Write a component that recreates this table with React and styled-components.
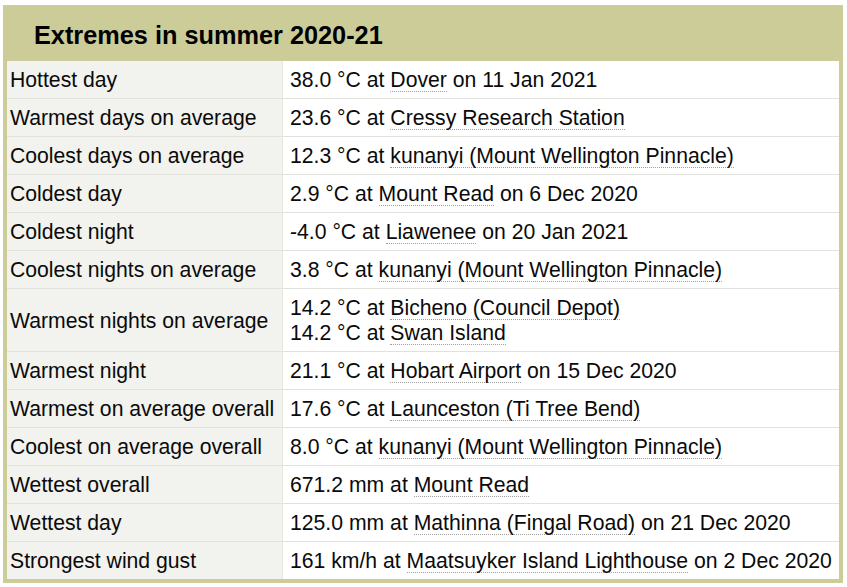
import React from "react";
import styled, { createGlobalStyle } from "styled-components";

const GlobalStyle = createGlobalStyle`
  body {
    margin: 0;
    background: #ffffff;
    font-family: "Liberation Sans", Arial, sans-serif;
  }
`;

const Page = styled.div`
  padding: 5px 0 0 3px;
`;

const Box = styled.div`
  width: 832px;
  border: 4px solid #cccc99;
  background: #cccc99;
`;

const Heading = styled.h2`
  margin: 0;
  height: 52px;
  padding-left: 27px;
  display: flex;
  align-items: center;
  font-size: 25.3px;
  font-weight: bold;
  color: #000;
`;

const Table = styled.table`
  width: 100%;
  border-collapse: collapse;
  font-size: 21.2px;
  line-height: 25px;
  color: #0a0a0a;
`;

const Row = styled.tr`
  border-top: 1px solid #e2e2dc;
  &:first-child {
    border-top: none;
  }
`;

const Label = styled.td`
  width: 272px;
  padding: 6px 0 6px 3px;
  background: #f2f2ee;
  border-right: 1px solid #e6e6e0;
  white-space: nowrap;
  vertical-align: middle;
`;

const Value = styled.td`
  padding: 6px 0 6px 7px;
  background: #ffffff;
  white-space: nowrap;
`;

const Place = styled.span`
  border-bottom: 1px dotted #a0a0a0;
`;

const rows = [
  ["Hottest day", [["38.0 °C at ", "Dover", " on 11 Jan 2021"]]],
  ["Warmest days on average", [["23.6 °C at ", "Cressy Research Station", ""]]],
  ["Coolest days on average", [["12.3 °C at ", "kunanyi (Mount Wellington Pinnacle)", ""]]],
  ["Coldest day", [["2.9 °C at ", "Mount Read", " on 6 Dec 2020"]]],
  ["Coldest night", [["-4.0 °C at ", "Liawenee", " on 20 Jan 2021"]]],
  ["Coolest nights on average", [["3.8 °C at ", "kunanyi (Mount Wellington Pinnacle)", ""]]],
  [
    "Warmest nights on average",
    [
      ["14.2 °C at ", "Bicheno (Council Depot)", ""],
      ["14.2 °C at ", "Swan Island", ""],
    ],
  ],
  ["Warmest night", [["21.1 °C at ", "Hobart Airport", " on 15 Dec 2020"]]],
  ["Warmest on average overall", [["17.6 °C at ", "Launceston (Ti Tree Bend)", ""]]],
  ["Coolest on average overall", [["8.0 °C at ", "kunanyi (Mount Wellington Pinnacle)", ""]]],
  ["Wettest overall", [["671.2 mm at ", "Mount Read", ""]]],
  ["Wettest day", [["125.0 mm at ", "Mathinna (Fingal Road)", " on 21 Dec 2020"]]],
  ["Strongest wind gust", [["161 km/h at ", "Maatsuyker Island Lighthouse", " on 2 Dec 2020"]]],
];

export default function App() {
  return (
    <>
      <GlobalStyle />
      <Page>
        <Box>
          <Heading>Extremes in summer 2020-21</Heading>
          <Table>
            <tbody>
              {rows.map(([label, lines]) => (
                <Row key={label}>
                  <Label>{label}</Label>
                  <Value>
                    {lines.map(([pre, place, post], i) => (
                      <React.Fragment key={i}>
                        {i > 0 && <br />}
                        {pre}
                        <Place>{place}</Place>
                        {post}
                      </React.Fragment>
                    ))}
                  </Value>
                </Row>
              ))}
            </tbody>
          </Table>
        </Box>
      </Page>
    </>
  );
}
